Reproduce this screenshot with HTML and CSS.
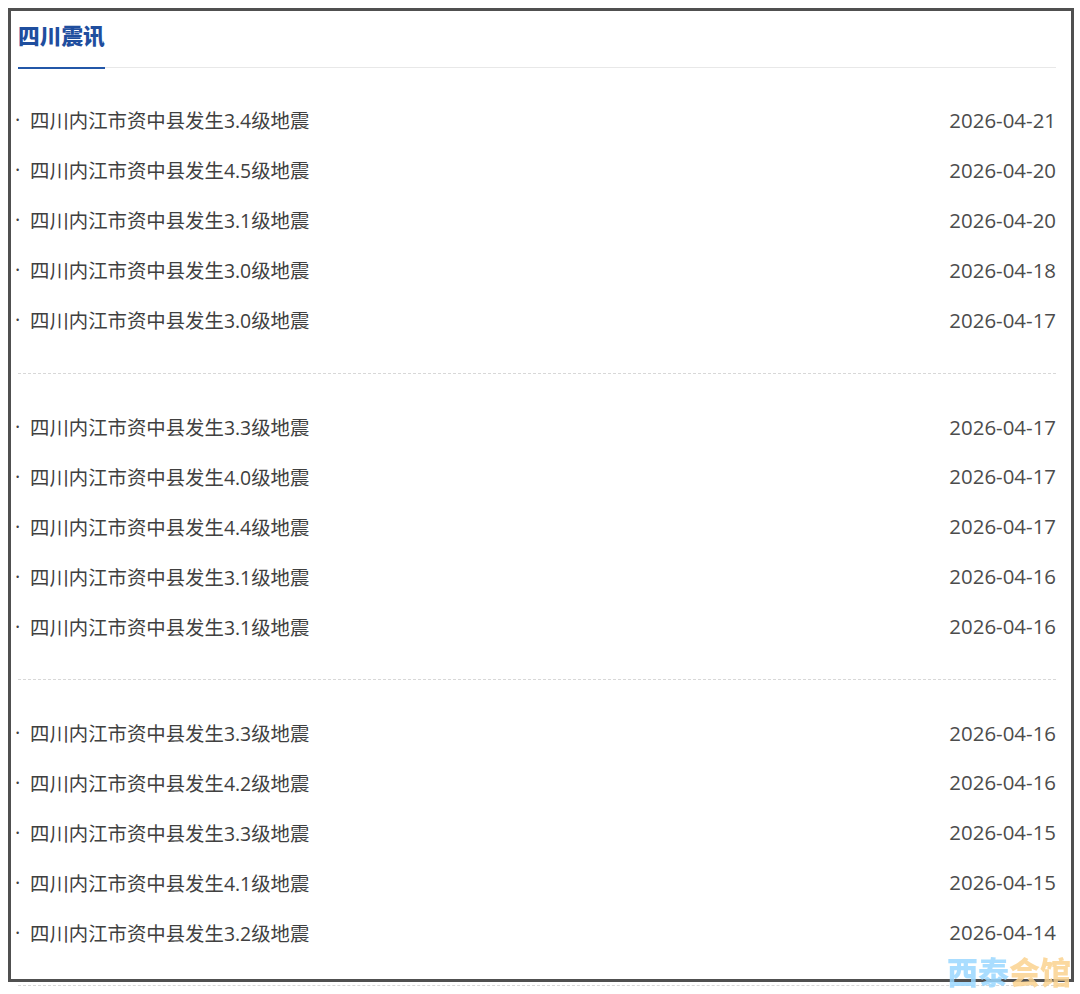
FILE: index.html
```html
<!DOCTYPE html>
<html lang="zh-CN">
<head>
<meta charset="utf-8">
<title>四川震讯</title>
<link rel="stylesheet" href="styles.css">
</head>
<body>
<main class="frame">
  <h2 class="head"><span class="head-title">四川震讯</span></h2>
  <ul class="group">
    <li class="row"><span class="dot">·</span><a class="link">四川内江市资中县发生3.4级地震</a><time class="date">2026-04-21</time></li>
    <li class="row"><span class="dot">·</span><a class="link">四川内江市资中县发生4.5级地震</a><time class="date">2026-04-20</time></li>
    <li class="row"><span class="dot">·</span><a class="link">四川内江市资中县发生3.1级地震</a><time class="date">2026-04-20</time></li>
    <li class="row"><span class="dot">·</span><a class="link">四川内江市资中县发生3.0级地震</a><time class="date">2026-04-18</time></li>
    <li class="row"><span class="dot">·</span><a class="link">四川内江市资中县发生3.0级地震</a><time class="date">2026-04-17</time></li>
  </ul>
  <ul class="group">
    <li class="row"><span class="dot">·</span><a class="link">四川内江市资中县发生3.3级地震</a><time class="date">2026-04-17</time></li>
    <li class="row"><span class="dot">·</span><a class="link">四川内江市资中县发生4.0级地震</a><time class="date">2026-04-17</time></li>
    <li class="row"><span class="dot">·</span><a class="link">四川内江市资中县发生4.4级地震</a><time class="date">2026-04-17</time></li>
    <li class="row"><span class="dot">·</span><a class="link">四川内江市资中县发生3.1级地震</a><time class="date">2026-04-16</time></li>
    <li class="row"><span class="dot">·</span><a class="link">四川内江市资中县发生3.1级地震</a><time class="date">2026-04-16</time></li>
  </ul>
  <ul class="group group-last">
    <li class="row"><span class="dot">·</span><a class="link">四川内江市资中县发生3.3级地震</a><time class="date">2026-04-16</time></li>
    <li class="row"><span class="dot">·</span><a class="link">四川内江市资中县发生4.2级地震</a><time class="date">2026-04-16</time></li>
    <li class="row"><span class="dot">·</span><a class="link">四川内江市资中县发生3.3级地震</a><time class="date">2026-04-15</time></li>
    <li class="row"><span class="dot">·</span><a class="link">四川内江市资中县发生4.1级地震</a><time class="date">2026-04-15</time></li>
    <li class="row"><span class="dot">·</span><a class="link">四川内江市资中县发生3.2级地震</a><time class="date">2026-04-14</time></li>
  </ul>
</main>
<div class="tail-rule"></div>
<div class="watermark"><span class="wm-blue">西泰</span><span class="wm-orange">会馆</span></div>
</body>
</html>
```

FILE: styles.css
```css
* { box-sizing: border-box; }
html, body { margin: 0; padding: 0; }
body {
  background: #fff;
  height: 994px;
  overflow: hidden;
  padding: 8px 6px 0 8px;
  font-family: "Open Sans", "Noto Sans CJK SC", sans-serif;
  color: #404040;
}
.frame {
  height: 974px;
  border: 3px solid #505050;
  padding: 0 15px 0 7px;
}
.head {
  margin: 0;
  height: 57px;
  border-bottom: 1px solid #e8e8e8;
  font-size: 21.7px;
  font-weight: 900;
  line-height: 50px;
  color: #1f4e9e;
}
.head-title {
  display: inline-block;
  height: 58px;
  border-bottom: 2px solid #2357a8;
}
.group {
  list-style: none;
  margin: 0;
  padding: 27px 0 0;
  border-bottom: 1px dashed #d8d8d8;
  height: 306px;
}
.group + .group { padding-top: 27.6px; }
.group-last { border-bottom: 0; }
.row {
  display: flex;
  align-items: center;
  height: 49.9px;
  font-size: 19.4px;
}
.dot {
  width: 12px;
  margin-left: -3px;
  margin-right: 3px;
  font-size: 20px;
}
.link { flex: 1; white-space: nowrap; }
.date { white-space: nowrap; color: #4c4c4c; font-size: 20.45px; }
.tail-rule {
  margin: 3px 0 0 10px;
  border-top: 1px dashed #d8d8d8;
  width: 1046px;
}
.watermark {
  position: absolute;
  left: 947px;
  top: 951px;
  font-family: "Noto Sans CJK SC", sans-serif;
  font-size: 31px;
  font-weight: 900;
  line-height: 40px;
  white-space: nowrap;
  opacity: 0.85;
  filter: blur(0.4px);
}
.wm-blue { color: #9bd8ff; }
.wm-orange { color: #fbd390; }
```
